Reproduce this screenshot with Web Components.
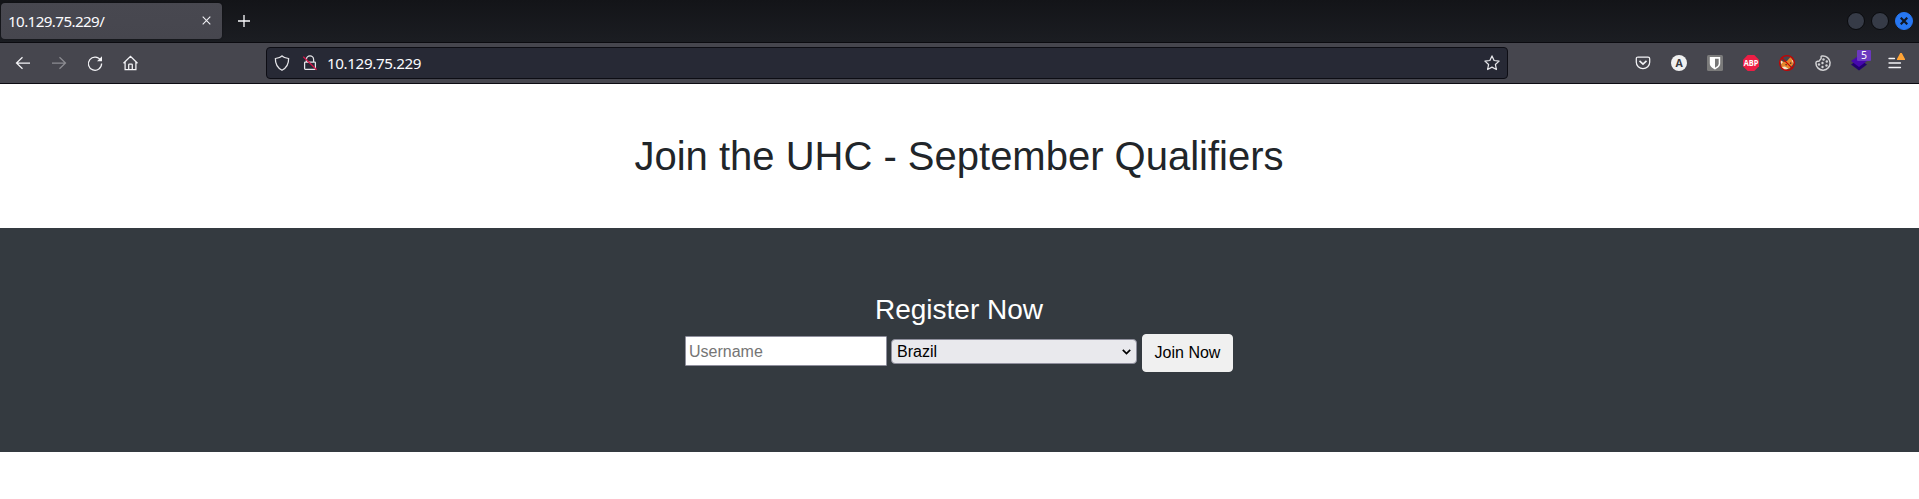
<!DOCTYPE html>
<html lang="en">
<head>
<meta charset="utf-8">
<title>10.129.75.229/</title>
<style>
html,body{margin:0;height:100%;background:#fff;overflow:hidden}
</style>
</head>
<body>
<browser-window>
  <tab-strip slot="tabs"><browser-tab>10.129.75.229/</browser-tab></tab-strip>
  <nav-toolbar slot="toolbar"><address-bar>10.129.75.229</address-bar></nav-toolbar>
  <page-hero>Join the UHC - September Qualifiers</page-hero>
  <register-panel>Register Now</register-panel>
</browser-window>
<script>
const define = (name, html) => customElements.define(name, class extends HTMLElement {
  constructor() {
    super();
    this.attachShadow({mode: 'open'}).innerHTML = html;
  }
});

const icons = {
  back: '<path d="M1.5 8H15M7.5 2.2 1.5 8l6 5.8"/>',
  forward: '<path d="M1 8h13.5M8.500 2.200 14.500 8l-6 5.800"/>',
  reload: '<path d="M13.600 5.200A6.600 6.600 0 1 0 14.600 8.600"/><path d="M15 1.300v5h-5z" fill="currentColor" stroke="none"/>',
  home: '<path d="M.5 8.300 7.500 1.300l7 7M2.100 7v7.700h10.800V7M5.700 14.500V9.800q0-.8.8-.8h2q.8 0 .8.8v4.700"/>',
  shield: '<path d="M8 .9C6.500 2.500 4 3.100 1.400 3.500c-.2 6 2 9.300 6.600 11.700 4.600-2.400 6.800-5.700 6.600-11.700C12 3.100 9.500 2.500 8 .9z"/>',
  lock: '<path d="M4.400 7V4.500a3.600 3.600 0 0 1 7.200 0V7M3.400 7h9.200q.8 0 .8.8v5.800q0 .8-.8.8H3.400q-.8 0-.8-.8V7.800q0-.8.8-.8z"/><path d="M1.300 1.700 14.700 14.700" stroke="#d9144a"/>',
  star: '<path d="m8 .9 2.100 4.600 5 .6-3.700 3.400 1 5L8 12.100l-4.400 2.400 1-5L.9 6.100l5-.6z" stroke-linejoin="round"/>',
  pocket: '<path d="M3 2h10q1.700 0 1.700 1.700v3.500a6.700 6.500 0 0 1-13.400 0V3.700Q1.300 2 3 2z"/><path d="m4.500 5.800 3.500 3.300 3.500-3.300" stroke-width="1.600"/>',
  account: '<circle cx="8" cy="8" r="8" fill="#f0f0f0" stroke="none"/><text x="8" y="11.700" text-anchor="middle" font-family="Open Sans,sans-serif" font-weight="700" font-size="10.500" fill="#38383d" stroke="none">A</text>',
  vault: '<rect width="16" height="16" rx="1.500" fill="#7b7b7b" stroke="none"/><path d="M2.800 2h10.400v6.500c0 3-2.500 4.600-5.200 5.900-2.700-1.300-5.200-2.900-5.200-5.900z" fill="#fff" stroke="none"/><path d="M8 3.700h3.700v4.800c0 2-1.600 3.100-3.700 4.200z" fill="#777" stroke="none"/>',
  abp: '<path d="M4.700 0h6.600L16 4.700v6.600L11.300 16H4.700L0 11.300V4.700z" fill="#ed1e45" stroke="none"/><text x="8" y="11.100" text-anchor="middle" textLength="14.600" lengthAdjust="spacingAndGlyphs" font-family="Open Sans,sans-serif" font-weight="700" font-size="8.800" fill="#fff" stroke="none">ABP</text>',
  fox: '<path d="M1 5 5 7 8 6 11.500 2 14.500 6 14 9.500 10.500 13.500 5 15 2.500 12 2 8.500z" fill="#e8862a" stroke="none"/><path d="M1 5 4 7 2.300 9zM12.300 4.500 14.500 6v3zM3 12l3-.5 3.500 2.200L5 15z" fill="#f5e4cf" stroke="none"/><path d="m6.500 9.500 1.300.5M11 8.500l1.300-.8" stroke="#422"/><circle cx="8" cy="8" r="7.400" stroke="#c80000" stroke-width="1.200"/><path d="m2.900 2.900 10.200 10.200" stroke="#c80000" stroke-width="1.200"/>',
  cookie: '<path d="M7.200 1C5 .9 7.200 3.500 5.500 4.300 4.500 4.900 4.700 6 3.500 6.200 2 6.500 1 6 .9 8A7.100 7.100 0 1 0 7.200 1z" stroke-width="1.500"/><g fill="currentColor" stroke="none"><circle cx="8.500" cy="4.500" r="1.200"/><circle cx="11.800" cy="6.500" r="1.200"/><circle cx="7.500" cy="8" r="1.200"/><circle cx="4" cy="9.500" r="1.200"/><circle cx="11.500" cy="10.500" r="1.200"/><circle cx="7.500" cy="12" r="1.200"/></g>',
  layers: '<path d="m0 9.500 8-5 8 5-8 6z" fill="#220070" stroke="none"/><path d="m0 6 8-5.500L16 6l-8 6z" fill="#4608ad" stroke="none"/>',
  menu: '<path d="M2 3.500h5.500M2 8h11.500M2 12.500h11.500" stroke-width="1.300" stroke-linecap="round"/>'
};

customElements.define('tool-icon', class extends HTMLElement {
  constructor() {
    super();
    this.attachShadow({mode: 'open'}).innerHTML = `
      <style>
        :host{display:block;position:relative;width:16px;height:16px;flex:none;color:#f4f4f7}
        :host([name="cookie"]){color:#d2d2d4}
        svg{display:block;width:16px;height:16px;fill:none;stroke:currentColor;stroke-width:1.25;overflow:visible}
      </style>
      <svg viewBox="0 0 16 16">${icons[this.getAttribute('name')]}</svg><slot></slot>`;
  }
});

define('browser-window', `
  <style>
    :host{display:flex;flex-direction:column;height:499px;width:100%;background:#fff;overflow:hidden}
  </style>
  <slot name="tabs"></slot><slot name="toolbar"></slot><slot></slot>`);

define('browser-tab', `
  <style>
    :host{display:flex;align-items:center;justify-content:space-between;box-sizing:border-box;
      width:221px;height:36px;padding:0 11px 0 7px;border-radius:4px;background:linear-gradient(#484850,#46464e);
      color:#fbfbfe;font:15.2px/20px "Noto Sans",sans-serif;letter-spacing:-.61px;box-shadow:0 0 2px #0007}
    span{padding-top:1px}
    svg{width:9px;height:9px;stroke:#f0f0f4;stroke-width:1.1}
  </style>
  <span><slot></slot></span>
  <svg viewBox="0 0 9 9"><path d="m.7.7 7.600 7.600m0-7.600L.7 8.300"/></svg>`);

define('tab-strip', `
  <style>
    :host{display:flex;align-items:center;box-sizing:border-box;height:43px;flex:none;padding:0 6px 1px 1px;
      background:linear-gradient(#131418,#1b1d22);border-bottom:1px solid #0b0b10}
    .plus{width:12px;height:12px;margin-left:16px;margin-top:1px;stroke:#fbfbfe;stroke-width:1.3}
    .controls{display:flex;gap:6px;margin-left:auto}
    .controls span{box-sizing:border-box;width:18px;height:18px;border-radius:50%;background:#363b47;border:1px solid #090a0d}
    .controls .close{display:grid;place-items:center;background:#2777f2;border-color:#2777f2}
    .close svg{width:8px;height:8px;stroke:#101725;stroke-width:2.2}
  </style>
  <slot></slot>
  <svg class="plus" viewBox="0 0 12 12"><path d="M6 0v12M0 6h12"/></svg>
  <div class="controls"><span></span><span></span><span class="close"><svg viewBox="0 0 8 8"><path d="m.7.7 6.600 6.600m0-6.600L.7 7.300"/></svg></span></div>`);

define('address-bar', `
  <style>
    :host{display:flex;align-items:center;box-sizing:border-box;width:1242px;height:32px;flex:none;padding:0 7px;
      background:#272935;border:1px solid #0d0d14;border-radius:4px;color:#fbfbfe;font:15.2px/20px "Noto Sans",sans-serif;letter-spacing:-.38px}
    .lock{margin-left:12px}
    .url{flex:1;margin-left:9px}
    tool-icon{color:#e6e6ea}
  </style>
  <tool-icon name="shield"></tool-icon>
  <tool-icon class="lock" name="lock"></tool-icon>
  <span class="url"><slot></slot></span>
  <tool-icon name="star"></tool-icon>`);

define('nav-toolbar', `
  <style>
    :host{display:flex;align-items:center;box-sizing:border-box;height:41px;flex:none;padding:0 16px 0 15px;
      background:#46464e;border-bottom:1px solid #0c0b12}
    .group{display:flex;gap:20px}
    .nav{width:251px}
    .extensions{margin-left:auto}
    .off{opacity:.4}
    .badge{position:absolute;left:6px;top:-5px;width:14px;height:11px;text-align:center;
      background:#6b38bf;color:#fff;font:10.5px/11px "Noto Sans",sans-serif;border-radius:1px}
    .alert{position:absolute;left:10px;top:-2px;width:8px;height:7px;background:#ffa436;clip-path:polygon(40% 0,60% 0,100% 85%,100% 100%,0 100%,0 85%)}
  </style>
  <div class="group nav">
    <tool-icon name="back"></tool-icon><tool-icon class="off" name="forward"></tool-icon>
    <tool-icon name="reload"></tool-icon><tool-icon name="home"></tool-icon>
  </div>
  <slot></slot>
  <div class="group extensions">
    <tool-icon name="pocket"></tool-icon><tool-icon name="account"></tool-icon>
    <tool-icon name="vault"></tool-icon><tool-icon name="abp"></tool-icon>
    <tool-icon name="fox"></tool-icon><tool-icon name="cookie"></tool-icon>
    <tool-icon name="layers"><span class="badge">5</span></tool-icon>
    <tool-icon name="menu"><span class="alert"></span></tool-icon>
  </div>`);

define('page-hero', `
  <style>
    :host{display:flex;justify-content:center;align-items:center;box-sizing:border-box;height:144px;flex:none;
      padding-right:1px;background:#fff;color:#212529}
    h1{margin:0;font:400 40px/48px "Liberation Sans",Arial,sans-serif}
  </style>
  <h1><slot></slot></h1>`);

define('register-panel', `
  <style>
    :host{display:flex;flex-direction:column;align-items:center;box-sizing:border-box;height:224px;flex:none;
      padding:65px 1px 0 0;background:#343a40;color:#fff;font:16px/24px "Liberation Sans",Arial,sans-serif}
    h3{margin:0 0 7px;font-weight:400;font-size:28px;line-height:34px}
    form{display:flex;align-items:flex-start;height:38px}
    input,select,button{font:inherit;box-sizing:border-box;margin:0}
    input{width:202px;height:30px;margin-top:2px;padding:3px 2px 1px 3px;border:1px solid #8f8f9d;border-radius:1px;background:#fff}
    input::placeholder{color:#757575;opacity:1}
    .pick{display:grid;align-items:center;margin:5px 5px 0 4px;width:246px;height:25px}
    select{grid-area:1/1;appearance:none;width:246px;height:25px;padding:0 5px;line-height:19px;border:1px solid #8f8f9d;
      border-radius:4px;background:#e9e9ed;color:#000}
    .pick svg{grid-area:1/1;justify-self:end;margin-right:6px;width:9px;height:6px;fill:none;stroke:#000;stroke-width:1.7;pointer-events:none}
    button{width:91px;height:38px;padding:0;border:1px solid #f0f0f0;border-radius:4px;background:#f0f0f0;color:#000}
  </style>
  <h3><slot></slot></h3>
  <form>
    <input type="text" placeholder="Username">
    <div class="pick"><select><option>Brazil</option></select><svg viewBox="0 0 9 6"><path d="m.8.8 3.700 3.700L8.200.8"/></svg></div>
    <button type="button">Join Now</button>
  </form>`);
</script>
</body>
</html>
